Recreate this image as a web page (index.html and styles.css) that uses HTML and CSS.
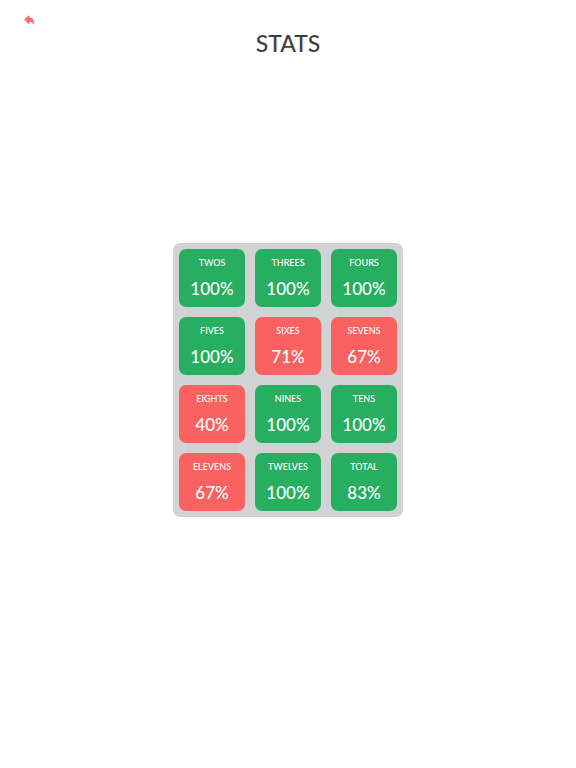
FILE: index.html
```html
<!DOCTYPE html>
<html lang="en">
<head>
<meta charset="utf-8">
<meta name="viewport" content="width=device-width, initial-scale=1">
<title>Stats</title>
<link rel="stylesheet" href="styles.css">
</head>
<body>
<header class="top">
  <button class="back" type="button" aria-label="Back">
    <svg viewBox="0 0 10 10" aria-hidden="true"><path d="M0.2 4.6 4.4 0.4Q5.2 -0.2 5.2 0.8V2.2C8.4 2.4 10.4 5 9.9 8.8Q9.7 9.9 9.1 9C8.3 7.6 7 7.1 5.2 7.1V8.8Q5.2 9.8 4.4 9.1Z"/></svg>
  </button>
  <h1 class="title">STATS</h1>
</header>
<main class="content">
  <dl class="board">
    <div class="card good"><dt>TWOS</dt><dd>100%</dd></div>
    <div class="card good"><dt>THREES</dt><dd>100%</dd></div>
    <div class="card good"><dt>FOURS</dt><dd>100%</dd></div>
    <div class="card good"><dt>FIVES</dt><dd>100%</dd></div>
    <div class="card bad"><dt>SIXES</dt><dd>71%</dd></div>
    <div class="card bad"><dt>SEVENS</dt><dd>67%</dd></div>
    <div class="card bad"><dt>EIGHTS</dt><dd>40%</dd></div>
    <div class="card good"><dt>NINES</dt><dd>100%</dd></div>
    <div class="card good"><dt>TENS</dt><dd>100%</dd></div>
    <div class="card bad"><dt>ELEVENS</dt><dd>67%</dd></div>
    <div class="card good"><dt>TWELVES</dt><dd>100%</dd></div>
    <div class="card good"><dt>TOTAL</dt><dd>83%</dd></div>
  </dl>
</main>
</body>
</html>
```
FILE: styles.css
```css
* {
  box-sizing: border-box;
}

body {
  margin: 0;
  min-height: 100vh;
  display: grid;
  grid-template-rows: 80px 1fr 88px;
  background: #fff;
  color: #404042;
  font-family: Lato, sans-serif;
}

.top {
  display: grid;
  grid-template-columns: 1fr auto 1fr;
  align-items: start;
  padding: 14px 23px 0;
}

.back {
  justify-self: start;
  display: flex;
  padding: 1px;
  border: 0;
  background: none;
  cursor: pointer;
}

.back svg {
  width: 10px;
  height: 10px;
  fill: #fa7070;
}

.title {
  margin: 14px 0 0;
  font-size: 23px;
  line-height: 30px;
  font-weight: 500;
}

.content {
  display: grid;
  place-items: center;
}

.board {
  display: grid;
  grid-template-columns: repeat(3, 66px);
  gap: 10px;
  margin: 0;
  padding: 6px;
  border-radius: 7px;
  background: #d2d3d5;
}

.card {
  display: flex;
  flex-direction: column;
  align-items: center;
  gap: 8px;
  height: 58px;
  padding-top: 8px;
  border-radius: 7px;
  color: #fff;
  font-weight: 500;
}

.good {
  background: #27ae60;
}

.bad {
  background: #fa6262;
}

.card dt {
  font-size: 9px;
  line-height: 12px;
}

.card dd {
  margin: 0;
  font-size: 17px;
  line-height: 24px;
}
```
